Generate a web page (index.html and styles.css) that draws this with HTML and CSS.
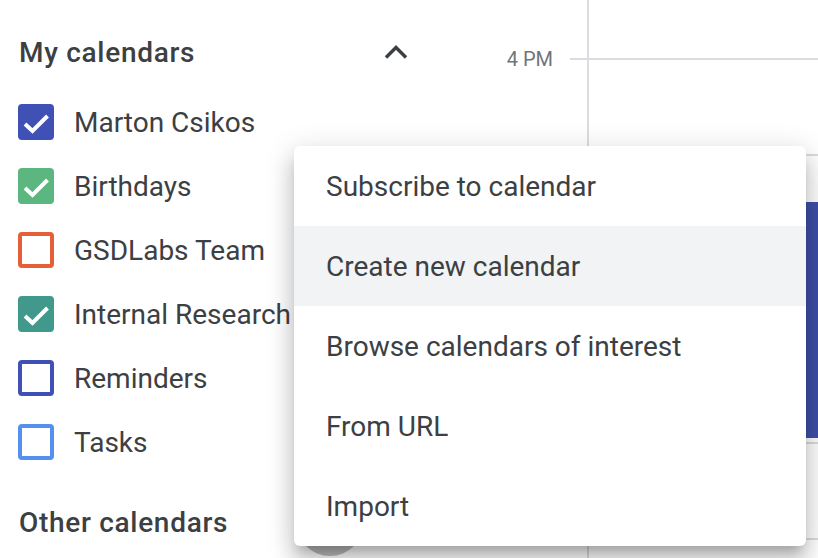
FILE: index.html
```html
<!DOCTYPE html>
<html>
<head>
<meta charset="utf-8">
<link rel="stylesheet" href="styles.css">
</head>
<body>
<div class="app">
  <aside class="sidebar">
    <div class="section-head my">
      <span class="title">My calendars</span>
      <span class="chev">
        <svg width="26" height="16" viewBox="0 0 26 16"><polyline points="3,13.5 13,3.5 23,13.5" fill="none" stroke="#3c4043" stroke-width="3.4"/></svg>
      </span>
    </div>
    <ul class="cal-list">
      <li class="cal"><span class="cb checked c-blueberry"><svg width="36" height="36" viewBox="0 0 36 36"><polyline points="7,20 14.5,27 29.5,12" fill="none" stroke="#fff" stroke-width="4"/></svg></span><span class="name">Marton Csikos</span></li>
      <li class="cal"><span class="cb checked c-sage"><svg width="36" height="36" viewBox="0 0 36 36"><polyline points="7,20 14.5,27 29.5,12" fill="none" stroke="#fff" stroke-width="4"/></svg></span><span class="name">Birthdays</span></li>
      <li class="cal"><span class="cb c-tangerine"></span><span class="name">GSDLabs Team</span></li>
      <li class="cal"><span class="cb checked c-peacock"><svg width="36" height="36" viewBox="0 0 36 36"><polyline points="7,20 14.5,27 29.5,12" fill="none" stroke="#fff" stroke-width="4"/></svg></span><span class="name">Internal Research</span></li>
      <li class="cal"><span class="cb c-blueberry"></span><span class="name">Reminders</span></li>
      <li class="cal"><span class="cb c-lavender"></span><span class="name">Tasks</span></li>
    </ul>
    <div class="section-head other">
      <span class="title">Other calendars</span>
      <span class="add-btn"></span>
    </div>
  </aside>
  <div class="times">
    <div class="slot"><span class="label">4 PM</span><span class="tick"></span></div>
    <div class="slot"><span class="label">5 PM</span><span class="tick"></span></div>
    <div class="slot"><span class="tick"></span></div>
    <div class="slot"><span class="tick"></span></div>
    <div class="slot"><span class="tick"></span></div>
    <div class="slot"><span class="tick"></span></div>
  </div>
  <div class="grid">
    <div class="hour"></div>
    <div class="hour"></div>
    <div class="hour"></div>
    <div class="hour"></div>
    <div class="hour"></div>
    <div class="hour"></div>
    <div class="event"></div>
  </div>
</div>
<div class="menu">
  <div class="item">Subscribe to calendar</div>
  <div class="item hover">Create new calendar</div>
  <div class="item">Browse calendars of interest</div>
  <div class="item">From URL</div>
  <div class="item">Import</div>
</div>
</body>
</html>
```
FILE: styles.css
```css
html, body {
  margin: 0;
  padding: 0;
  width: 818px;
  height: 558px;
  overflow: hidden;
  background: #fff;
  font-family: Roboto, "Liberation Sans", sans-serif;
  color: #3c4043;
}
.app {
  display: flex;
  height: 558px;
  overflow: hidden;
}
.sidebar {
  width: 430px;
  flex: none;
  padding-top: 24px;
  box-sizing: border-box;
}
.section-head {
  height: 56px;
  display: flex;
  align-items: center;
  padding-left: 19px;
}
.section-head .title {
  font-size: 28px;
  font-weight: 500;
  letter-spacing: 0.7px;
  line-height: 36px;
  padding-top: 2px;
}
.my {
  padding-right: 14px;
  justify-content: space-between;
}
.chev {
  width: 40px;
  height: 40px;
  display: flex;
  align-items: center;
  justify-content: center;
}
.cal-list {
  list-style: none;
  margin: 10px 0 0 0;
  padding: 0;
}
.cal {
  height: 64px;
  display: flex;
  align-items: center;
  padding-left: 18px;
}
.cb {
  width: 36px;
  height: 36px;
  box-sizing: border-box;
  border: 4px solid;
  border-radius: 4px;
  flex: none;
}
.cb svg {
  display: block;
  margin: -4px;
}
.cb.checked { background: currentColor; }
.c-blueberry { color: #3f51b5; border-color: #3f51b5; }
.c-sage { color: #5cb67f; border-color: #5cb67f; }
.c-tangerine { color: #e65f38; border-color: #e65f38; }
.c-peacock { color: #40998a; border-color: #40998a; }
.c-lavender { color: #5690ee; border-color: #5690ee; }
.name {
  margin-left: 20px;
  font-size: 28px;
  line-height: 36px;
  padding-top: 2px;
  color: #3c4043;
}
.other {
  margin-top: 20px;
  padding-right: 66px;
}
.add-btn {
  margin-left: auto;
  width: 68px;
  height: 68px;
  border-radius: 50%;
  background: #bdbdbd;
  flex: none;
}
.times {
  width: 157px;
  flex: none;
  padding-top: 47px;
  box-sizing: border-box;
}
.slot {
  height: 24px;
  margin-bottom: 72px;
  display: flex;
  align-items: center;
  justify-content: flex-end;
}
.label {
  font-size: 20px;
  line-height: 24px;
  color: #70757a;
  margin-right: 1px;
}
.tick {
  width: 17px;
  height: 2px;
  background: #dadce0;
  margin-left: 16px;
}
.grid {
  flex: 1;
  border-left: 2px solid #dadce0;
  padding-top: 58px;
  position: relative;
}
.hour {
  height: 96px;
  border-top: 2px solid #dadce0;
  box-sizing: border-box;
}
.event {
  position: absolute;
  top: 202px;
  left: 150px;
  right: 0;
  height: 236px;
  background: #3f4fa8;
  border-radius: 4px 0 0 4px;
}
.menu {
  position: absolute;
  left: 294px;
  top: 146px;
  width: 512px;
  background: #fff;
  border-radius: 6px;
  box-shadow: 0 10px 10px -6px rgba(0,0,0,.2), 0 16px 20px 2px rgba(0,0,0,.14), 0 6px 28px 4px rgba(0,0,0,.12);
  overflow: hidden;
}
.item {
  height: 80px;
  line-height: 82px;
  padding-left: 32px;
  font-size: 28px;
  color: #3c4043;
}
.item.hover {
  background: #f1f3f4;
}
```
